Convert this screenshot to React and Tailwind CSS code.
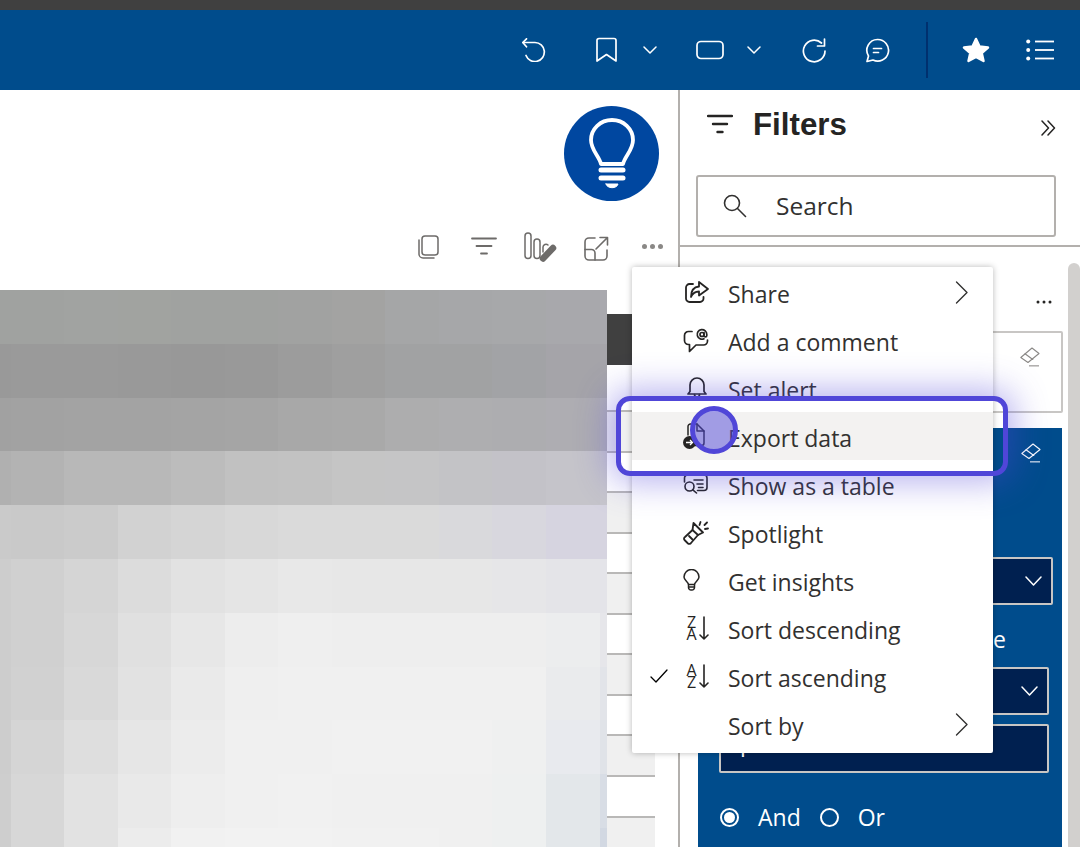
const CELLS = [
  ["#a0a2a0","#a0a2a0","#a1a3a1","#a1a3a0","#a0a2a0","#a0a2a0","#a1a2a1","#a3a3a2","#a5a6a7","#a6a7a9","#a7a8aa","#a8a8ac","#a9a9ae"],
  ["#999999","#9a9a9a","#9a9a9a","#999999","#989898","#999999","#9c9c9c","#9f9f9f","#a1a2a3","#a1a2a3","#a2a3a6","#a5a4a9","#a6a5aa"],
  ["#a1a1a1","#a2a2a2","#a3a3a3","#a3a3a3","#a4a4a4","#a5a5a5","#a8a8a8","#a9a9a9","#adadae","#aeaeb0","#adadb0","#aeadb2","#b0afb6"],
  ["#b0b0b0","#b3b3b3","#b8b8b8","#b8b8b8","#bcbcbc","#c1c1c1","#c2c2c2","#c5c5c5","#c5c5c6","#c3c3c6","#c3c2c8","#c5c4ca","#c7c6cc"],
  ["#cacaca","#c9c9c9","#cbcbcb","#d2d2d2","#d5d5d5","#d8d8d8","#dadada","#dadada","#dadada","#d9d9dc","#d8d7de","#d6d4e0","#d6d4e0"],
  ["#cdcdcd","#d0d0d0","#d5d5d5","#dcdcdc","#e2e2e2","#e5e5e5","#e8e8e8","#e7e7e7","#e7e7e7","#e7e7e7","#e6e6e8","#e4e4e8","#e4e4e9"],
  ["#cdcdcd","#d0d0d0","#d7d7d7","#e0e0e0","#e7e7e7","#ededed","#efefef","#eeeeee","#eeeeee","#eeeeee","#eeeeee","#ecedee","#e6e6ea"],
  ["#cdcdcd","#d1d1d1","#d9d9d9","#e2e2e2","#eaeaea","#efefef","#f0f0f0","#f0f0f0","#f0f0f0","#f0f0f0","#f0f0f0","#eaebed","#e2e4e9"],
  ["#cdcdcd","#d5d5d5","#dedede","#e6e6e6","#ececec","#f0f0f0","#f0f0f0","#f1f1f1","#f1f1f1","#f1f1f1","#eff0f0","#e8eaee","#e0e3e8"],
  ["#cecece","#d7d7d7","#e2e2e2","#e9e9e9","#eeeeee","#f0f0f0","#f1f1f1","#f0f0f0","#f0f0f0","#f0f0f0","#eef0f0","#e3e7ea","#d8dde5"],
  ["#cecece","#d7d7d7","#e2e2e2","#ececec","#f1f1f1","#f2f2f2","#f2f2f2","#f1f1f1","#f1f1f1","#f0f0f0","#eef0f0","#e3e7ea","#d2d8e2"],
];

const ROWS = [
  ["h-[47px]", "bg-white"],
  ["h-[41px]", "bg-[#f0f0f0]"],
  ["h-[40px]", "bg-white"],
  ["h-[41px]", "bg-[#f0f0f0]"],
  ["h-[40px]", "bg-white"],
  ["h-[41px]", "bg-[#f0f0f0]"],
  ["h-[40px]", "bg-white"],
  ["h-[41px]", "bg-[#f0f0f0]"],
  ["h-[40px]", "bg-white"],
  ["h-[41px]", "bg-[#f0f0f0]"],
  ["h-[41px]", "bg-white"],
  ["h-[41px]", "bg-[#f0f0f0]"],
];

const S = ({ w, h, children, className = "", sw = 1.7 }) => (
  <svg width={w} height={h} viewBox={`0 0 ${w} ${h}`} fill="none" stroke="currentColor" strokeWidth={sw} strokeLinecap="round" strokeLinejoin="round" className={`shrink-0 ${className}`}>
    {children}
  </svg>
);

const Chevron = ({ w = 14, h = 7 }) => (
  <S w={w} h={h + 2} sw={1.5}><path d={`M1 1L${w / 2} ${h}L${w - 1} 1`} /></S>
);
const ChevronR = () => (
  <S w={13} h={23} sw={1.4}><path d="M1.500 1L12 11.500L1.500 22" /></S>
);

const Eraser = () => (
  <S w={20} h={20} sw={1.1}>
    <path d="M0.800 10.500L12 1L19 6.500L8 15.500Z" />
    <path d="M5 6.800L12.800 12.500" />
    <path d="M9 18.800H19" strokeLinecap="butt" strokeWidth={1.5} opacity={0.7} />
  </S>
);

const MenuRow = ({ icon, label, right, check, hl }) => (
  <div className={`h-12 flex items-center relative ${hl ? "bg-[#f3f2f1]" : ""}`}>
    <div className="w-[18px] ml-[18px] flex justify-center">
      {check && (
        <S w={18} h={14} sw={1.3}><path d="M1 8L6 13L17 1" /></S>
      )}
    </div>
    <div className="w-[40px] ml-[15px] flex items-center text-[#252423]">{icon}</div>
    <span className="ml-[5px] mt-[4px] text-[#323130] text-[23px] leading-none" style={{ fontFamily: '"Open Sans","Noto Sans",sans-serif' }}>{label}</span>
    {right && <div className="ml-auto mr-[25px] text-[#323130]"><ChevronR /></div>}
  </div>
);

const shareI = (
  <S w={25} h={22} sw={1.8} className="ml-[2px]">
    <path d="M8 3H4.500A3.500 3.500 0 0 0 1 6.500V17.500A3.500 3.500 0 0 0 4.500 21H15A3.500 3.500 0 0 0 18.500 17.500V16" />
    <path d="M14 1L23 8L14 14.500V10.500C10 10.500 7.500 12.500 6 16C6 10 9 6 14 5.500Z" />
  </S>
);
const commentI = (
  <S w={26} h={25} sw={1.7}>
    <path d="M9 3.500H5.500A4 4 0 0 0 1.500 7.500V12.500A4 4 0 0 0 5.500 16.500H6.500V23.500L13 17H20.500A4 4 0 0 0 24.500 13V12" />
    <circle cx="19" cy="6.500" r="2" />
    <path d="M21 4.500V7.500A1.300 1.300 0 0 0 23.800 7.500V6.500A4.800 4.800 0 1 0 21 10.800" />
  </S>
);
const bellI = (
  <S w={20} h={26} sw={1.7} className="ml-[4px]">
    <path d="M3 16.500V10A7 7 0 0 1 17 10V16.500L19 19H1Z" />
    <path d="M7.500 19.500A2.500 2.500 0 0 0 12.500 19.500" />
  </S>
);
const exportI = (
  <div className="relative w-[24px] h-[26px]">
    <S w={22} h={24} sw={1.5} className="absolute left-[2px] top-0">
      <path d="M3 12V3.500A2.500 2.500 0 0 1 5.500 1H12L19 8V20A2.500 2.500 0 0 1 16.500 22.500H9" />
      <path d="M12 1V8H19" />
    </S>
    <svg width="13" height="13" viewBox="0 0 13 13" className="absolute left-0 bottom-0">
      <circle cx="6.500" cy="6.500" r="6.500" fill="#252423" />
      <path d="M3 6.500H9.500M7 4L9.500 6.500L7 9" stroke="#fff" strokeWidth="1.300" fill="none" />
    </svg>
  </div>
);
const tableI = (
  <S w={25} h={20} sw={1.6}>
    <path d="M1.500 8V4A3 3 0 0 1 4.500 1H21A3 3 0 0 1 24 4V13.500A3 3 0 0 1 21 16.500H14.500" />
    <path d="M11 6H20M14 10H20M15.500 13.500H20" />
    <circle cx="6.500" cy="12.500" r="4.500" />
    <path d="M9.800 15.800L13.500 19" />
  </S>
);
const spotI = (
  <S w={26} h={25} sw={1.8}>
    <path d="M10.500 3L20 12.500L15 15L8 23A2 2 0 0 1 5 23.500L1.500 20A2 2 0 0 1 2 17L9.500 10Z" />
    <path d="M9.500 10L15 15" />
    <path d="M6 16L9.500 19.500" />
    <path d="M17.500 2L16.500 5M24 2.500L21.500 5M25 8.500L22 9" />
  </S>
);
const bulbI = (
  <S w={17} h={22} sw={1.5}>
    <path d="M5.500 15.500C5 12.500 1 11 1 8A7.500 7.500 0 0 1 16 8C16 11 12 12.500 11.500 15.500Z" />
    <path d="M5.500 15.500V18.500A2.500 2.500 0 0 0 8 21H9A2.500 2.500 0 0 0 11.500 18.500V15.500M6 18H11" />
  </S>
);
const SortI = ({ top, bottom }) => (
  <div className="flex items-center h-6 w-6 ml-[3px]">
    <div className="flex flex-col items-center w-[11px] text-[16px] leading-[12px]" style={{ fontFamily: '"Open Sans",sans-serif' }}>
      <span>{top}</span>
      <span>{bottom}</span>
    </div>
    <S w={10} h={24} sw={1.6} className="ml-[2px]">
      <path d="M5 1V23M1 19L5 23L9 19" />
    </S>
  </div>
);

export default function App() {
  return (
    <div className="relative w-[1080px] h-[847px] overflow-hidden bg-white" style={{ fontFamily: '"Open Sans","Noto Sans",sans-serif' }}>
      <div className="h-[10px] bg-[#404040]" />

      <header className="h-20 bg-[#004c8c] flex items-center text-white">
        <div className="ml-[522px]">
          <S w={24} h={24}>
            <path d="M0.800 4.500H13A9.500 9.500 0 1 1 4 17.500" />
            <path d="M4.500 0.800L0.800 4.500L4.500 8.800" />
          </S>
        </div>
        <div className="ml-[50px]">
          <S w={22} h={26}>
            <path d="M1 3.500A2 2 0 0 1 3 1.500H18A2 2 0 0 1 20 3.500V24L10.500 17.500L1 24Z" />
          </S>
        </div>
        <div className="ml-[25px]"><Chevron /></div>
        <div className="ml-[39px]">
          <S w={28} h={20}><rect x="1" y="1.500" width="26" height="17" rx="4" /></S>
        </div>
        <div className="ml-[23px]"><Chevron /></div>
        <div className="ml-[41px]">
          <S w={25} h={25}>
            <path d="M23 13A10.800 10.800 0 1 1 19.500 5" />
            <path d="M22.500 1V8H15.500" />
          </S>
        </div>
        <div className="ml-[38px]">
          <S w={25} h={25}>
            <path d="M12.500 1.500A10.800 10.800 0 1 1 8 22L2 23.500L3.500 18A10.800 10.800 0 0 1 12.500 1.500Z" />
            <path d="M8.500 10.500H16.500M8.500 14.500H13.500" />
          </S>
        </div>
        <div className="ml-[36px] w-[2px] h-14 bg-[#00306e]" />
        <div className="ml-[34px]">
          <svg width="28" height="26" viewBox="0 0 28 26" fill="#fff" stroke="#fff" strokeWidth="2.500" strokeLinejoin="round">
            <path d="M14 2L17.500 9.500L26 10.500L19.700 16L21.500 24L14 20L6.500 24L8.300 16L2 10.500L10.500 9.500Z" />
          </svg>
        </div>
        <div className="ml-[36px]">
          <svg width="28" height="22" viewBox="0 0 28 22" fill="#fff">
            <circle cx="2.200" cy="2.500" r="2" />
            <circle cx="2.200" cy="11" r="2" />
            <circle cx="2.200" cy="19.500" r="2" />
            <rect x="9" y="1.600" width="19" height="1.800" />
            <rect x="9" y="10.100" width="19" height="1.800" />
            <rect x="9" y="18.600" width="19" height="1.800" />
          </svg>
        </div>
      </header>

      <main className="flex h-[757px]">
        <section className="w-[680px] border-r-2 border-[#b3b0ad] shrink-0 overflow-hidden">
          <div className="h-[111px] pt-4 flex justify-end pr-[19px]">
            <div className="w-[95px] h-[95px] rounded-full bg-[#0047a0] flex items-center justify-center">
              <svg width="46" height="72" viewBox="0 0 46 72" fill="none" stroke="#fff" strokeWidth="3.800" strokeLinecap="round" strokeLinejoin="round">
                <path d="M12 46C10 38 2 32 2 22A21 20 0 0 1 44 22C44 32 36 38 34 46Z" />
                <path d="M12 52H34" strokeWidth="5" />
                <path d="M12 60H34" strokeWidth="5" />
                <path d="M17 66H29C28 71 18 71 17 66Z" fill="#fff" strokeWidth="1" />
              </svg>
            </div>
          </div>
          <div className="h-[89px] flex items-start text-[#6d6b69]">
            <div className="ml-[417px] mt-[34px]">
              <S w={22} h={24} sw={1.5}>
                <rect x="5" y="1" width="16" height="19" rx="3" />
                <path d="M2 5V19A4 4 0 0 0 6 23H17" />
              </S>
            </div>
            <div className="ml-[32px] mt-[36px]">
              <S w={26} h={18} sw={1.8}><path d="M1 1.500H25M5.500 9H20.500M10 16.500H16" /></S>
            </div>
            <div className="ml-[27px] mt-[31px]">
              <svg width="33" height="30" viewBox="0 0 33 30" fill="none" stroke="currentColor" strokeWidth="1.500" strokeLinecap="round">
                <rect x="1" y="1" width="6" height="25.500" rx="3" />
                <rect x="10" y="7" width="6" height="19.500" rx="3" />
                <path d="M19 20V15A3 3 0 0 1 24 13" />
                <path d="M29 16L19 26.500" strokeWidth="6.500" />
              </svg>
            </div>
            <div className="ml-[27px] mt-[35px]">
              <S w={25} h={25} sw={1.6}>
                <path d="M11 2H5A4 4 0 0 0 1 6V20A4 4 0 0 0 5 24H19A4 4 0 0 0 23 20V14" />
                <path d="M1 13.500H7.500A3.500 3.500 0 0 1 11 17V24" />
                <path d="M12 13L23.500 1.500M16 1.500H23.500V9" />
              </S>
            </div>
            <div className="ml-[33px] mt-[43px] flex gap-[3px]">
              <span className="w-[5px] h-[5px] rounded-full bg-[#8a8886]" />
              <span className="w-[5px] h-[5px] rounded-full bg-[#8a8886]" />
              <span className="w-[5px] h-[5px] rounded-full bg-[#8a8886]" />
            </div>
          </div>
          <div className="flex">
            <div className="w-[607px] h-[557px] overflow-hidden grid grid-cols-[10.500px_repeat(11,53.560px)_8px] auto-rows-[53.800px] shrink-0">
              {CELLS.flat().map((c, i) => (
                <div key={i} style={{ backgroundColor: c }} />
              ))}
            </div>
            <div className="w-12 pt-6 shrink-0">
              <div className="h-[51px] bg-[#404040]" />
              {ROWS.map(([h, bg], i) => (
                <div key={i} className={`${h} ${bg} border-b-2 border-[#b9b8b7]`} />
              ))}
            </div>
          </div>
        </section>

        <aside className="flex-1 flex flex-col min-w-0">
          <div className="h-[68px] flex items-center pl-[27px] pr-[24px] text-[#252423]">
            <S w={26} h={20} sw={2.400}><path d="M1 2H25M6 10H20M10.500 18H15.500" /></S>
            <h1 className="ml-[20px] mt-[2px] text-[31.300px] leading-none font-bold text-[#252423]" style={{ fontFamily: '"Liberation Sans",sans-serif' }}>Filters</h1>
            <div className="ml-auto mt-[7px]">
              <S w={15} h={16} sw={1.500}>
                <path d="M1 1L7.500 8L1 15M7 1L13.500 8L7 15" />
              </S>
            </div>
          </div>
          <div className="mt-[17px] ml-4 mr-6 h-[62px] border-2 border-[#b3b0ad] rounded-[3px] flex items-center pl-[25px]">
            <S w={24} h={24} sw={1.600} className="text-[#323130]">
              <circle cx="9" cy="9" r="7.500" />
              <path d="M14.500 14.500L22.500 22.500" />
            </S>
            <span className="ml-[29px] text-[24.500px] leading-none text-[#323130]">Search</span>
          </div>
          <div className="mt-2 h-[2px] bg-[#b3b0ad]" />
          <div className="flex flex-1 min-h-0">
            <div className="w-[388px] pl-[18px] pr-[6px] overflow-hidden">
              <div className="h-[84px] flex justify-end items-start pt-[53px] pr-[10px]">
                <svg width="16" height="4" viewBox="0 0 16 4" fill="#252423">
                  <circle cx="2" cy="2" r="1.500" />
                  <circle cx="8" cy="2" r="1.500" />
                  <circle cx="14" cy="2" r="1.500" />
                </svg>
              </div>
              <div className="h-[82px] -mr-px border-2 border-[#c8c6c4] rounded-[2px] flex justify-end pt-[14px] pr-[21px] text-[#8a8886]">
                <Eraser />
              </div>
              <div className="mt-[15px] h-[500px] bg-[#004c8c] text-white px-[21px]">
                <div className="h-[129px] flex justify-end pt-[15px]">
                  <Eraser />
                </div>
                <div className="h-[48px] -mr-[12px] bg-[#002050] border-2 border-[#c8c6c4] rounded-[2px] flex items-center justify-end pr-[9px]">
                  <Chevron w={17} h={9} />
                </div>
                <div className="h-[62px] flex justify-end items-end pr-[35px] pb-[6px] text-[23px] leading-[44px] whitespace-nowrap">Show items when the value</div>
                <div className="h-[48px] -mr-[8px] bg-[#002050] border-2 border-[#c8c6c4] rounded-[2px] flex items-center justify-end pr-[9px]">
                  <Chevron w={17} h={9} />
                </div>
                <div className="mt-[9px] h-[49px] -mr-[8px] bg-[#002050] border-2 border-[#c8c6c4] rounded-[2px] flex items-center pl-[19px] pb-[12px] text-[23px] leading-none">p</div>
                <div className="mt-[33px] flex items-center text-[23px] leading-none">
                  <span className="ml-px w-[19px] h-[19px] rounded-full border-2 border-white flex items-center justify-center">
                    <span className="w-[11px] h-[11px] rounded-full bg-white" />
                  </span>
                  <span className="ml-[19px]">And</span>
                  <span className="ml-[19px] w-[19px] h-[19px] rounded-full border-2 border-white" />
                  <span className="ml-[19px]">Or</span>
                </div>
              </div>
            </div>
            <div className="w-3 mt-4 bg-[#d2d0ce] rounded-t-md" />
          </div>
        </aside>
      </main>

      <div className="absolute left-[632px] top-[267px] w-[361px] h-[486px] pt-px bg-white rounded-[2px] shadow-[0_0_6px_rgba(0,0,0,0.28)]">
        <MenuRow icon={shareI} label="Share" right />
        <MenuRow icon={commentI} label="Add a comment" />
        <MenuRow icon={bellI} label="Set alert" />
        <MenuRow icon={exportI} label="Export data" hl />
        <MenuRow icon={tableI} label="Show as a table" />
        <MenuRow icon={spotI} label="Spotlight" />
        <MenuRow icon={bulbI} label="Get insights" />
        <MenuRow icon={<SortI top="Z" bottom="A" />} label="Sort descending" />
        <MenuRow icon={<SortI top="A" bottom="Z" />} label="Sort ascending" check />
        <MenuRow label="Sort by" right />
      </div>

      <div className="absolute left-[616px] top-[396px] w-[392px] h-[80px] rounded-[14px] border-[5px] border-[#5046d8] shadow-[0_0_34px_6px_rgba(80,70,216,0.42)]" />
      <div className="absolute left-[690px] top-[406px] w-[48px] h-[48px] rounded-full border-[5px] border-[#5046d8] bg-[#5046d8]/50" />
    </div>
  );
}
